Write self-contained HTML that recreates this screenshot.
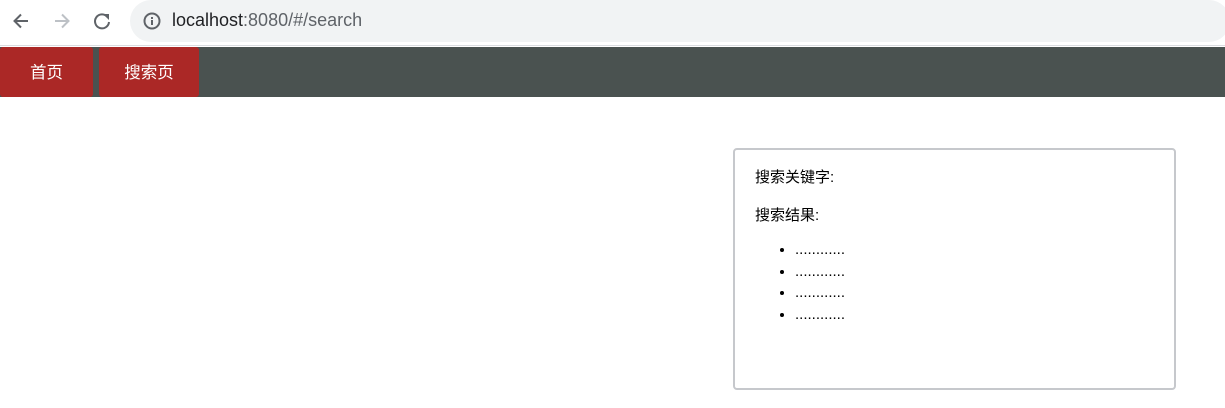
<!DOCTYPE html>
<html><head><meta charset="utf-8"><style>
*{margin:0;padding:0;box-sizing:border-box}
body{width:1225px;height:408px;overflow:hidden;background:#fff;font-family:"Liberation Sans","Noto Sans CJK SC",sans-serif;position:relative}
.bar{position:absolute;left:0;top:0;width:1225px;height:46px;background:#fff;border-bottom:1px solid #dadce0}
.url{position:absolute;left:130px;top:0;width:1100px;height:42px;background:#f1f3f4;border-radius:21px}
.url span{position:absolute;left:42px;top:10px;font-size:18px;color:#202124}
.url span i{font-style:normal;color:#5f6368}
.nav{position:absolute;left:0;top:47px;width:1225px;height:50px;background:#4a5250}
.tab{position:absolute;top:0;height:50px;background:#ab2826;color:#fff;font-size:16.5px;line-height:52px;text-align:center;border-radius:3px}
.box{position:absolute;left:733px;top:148px;width:443px;height:242px;border:2px solid #c6c8cc;border-radius:4px;font-size:15px;color:#000}
.box p{position:absolute;left:20px}
.box ul{position:absolute;left:60px;top:92px;list-style:disc}
.box li{height:21.5px;line-height:16px}
</style></head><body>
<div class="bar">
<svg style="position:absolute;left:10px;top:10px" width="22" height="22" viewBox="0 0 22 22"><path d="M18 11H5M11 4.5L4.5 11 11 17.5" stroke="#5f6368" stroke-width="2" fill="none"/></svg>
<svg style="position:absolute;left:51px;top:10px" width="22" height="22" viewBox="0 0 22 22"><path d="M4 11H17M11 4.5L17.5 11 11 17.5" stroke="#bdc1c6" stroke-width="2" fill="none"/></svg>
<svg style="position:absolute;left:91px;top:10px" width="22" height="22" viewBox="0 0 22 22"><path d="M16.5 7A7 7 0 1 0 18 12" stroke="#5f6368" stroke-width="2" fill="none"/><path d="M12 4h6v6z" fill="#5f6368"/></svg>
<div class="url">
<svg style="position:absolute;left:12px;top:11px" width="20" height="20" viewBox="0 0 20 20"><circle cx="10" cy="10" r="7.5" stroke="#5f6368" stroke-width="2" fill="none"/><rect x="9" y="9" width="2" height="5" fill="#5f6368"/><rect x="9" y="6" width="2" height="2" fill="#5f6368"/></svg>
<span>localhost<i>:8080/#/search</i></span></div>
</div>
<div class="nav">
<div class="tab" style="left:0;width:93px">首页</div>
<div class="tab" style="left:99px;width:100px">搜索页</div>
</div>
<div class="box">
<p style="top:16px">搜索关键字:</p>
<p style="top:54px">搜索结果:</p>
<ul><li>............</li><li>............</li><li>............</li><li>............</li></ul>
</div>
</body></html>
